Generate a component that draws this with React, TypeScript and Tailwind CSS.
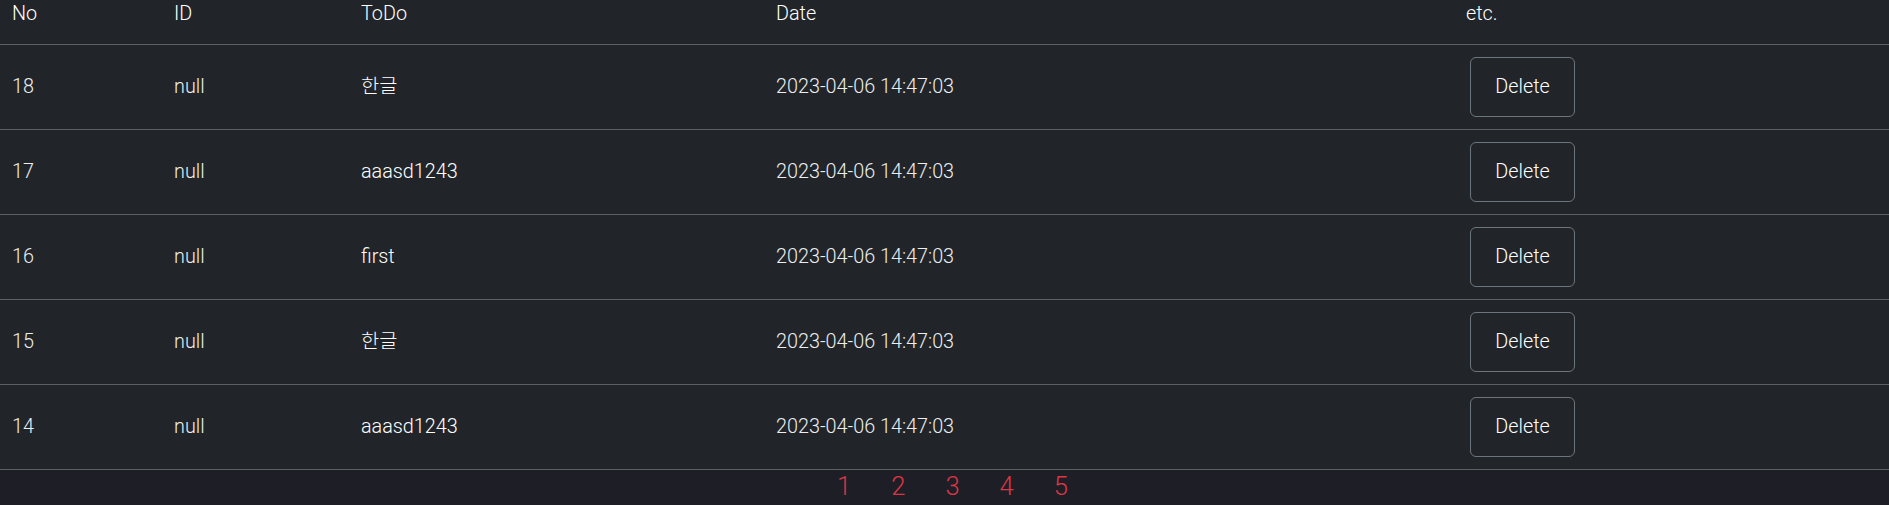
const todos = [
  { no: 18, id: "null", todo: "한글", date: "2023-04-06 14:47:03" },
  { no: 17, id: "null", todo: "aaasd1243", date: "2023-04-06 14:47:03" },
  { no: 16, id: "null", todo: "first", date: "2023-04-06 14:47:03" },
  { no: 15, id: "null", todo: "한글", date: "2023-04-06 14:47:03" },
  { no: 14, id: "null", todo: "aaasd1243", date: "2023-04-06 14:47:03" },
];

const font = {
  fontFamily: '"Roboto", "Noto Sans CJK KR", sans-serif',
};

export default function App() {
  return (
    <div
      style={font}
      className="min-h-screen bg-[#1e1f26] text-[19.8px] font-light"
    >
      <table className="w-full border-collapse bg-[#212529] text-[#eceef0]">
        <thead>
          <tr className="h-[44px] border-b border-[#5c5f63] text-left align-top leading-[1.45] text-white">
            <th className="w-[162px] px-3 font-light">No</th>
            <th className="w-[187px] px-3 font-light">ID</th>
            <th className="w-[415px] px-3 font-light">ToDo</th>
            <th className="w-[690px] px-3 font-light">Date</th>
            <th className="px-3 font-light">etc.</th>
          </tr>
        </thead>
        <tbody>
          {todos.map((t) => (
            <tr
              key={t.no}
              className="h-[85px] border-b border-[#5c5f63] align-middle leading-[1.5]"
            >
              <td className="px-3">{t.no}</td>
              <td className="px-3">{t.id}</td>
              <td className="px-3 text-white">{t.todo}</td>
              <td className="px-3">{t.date}</td>
              <td className="px-3 pl-[16px]">
                <button className="h-[60px] w-[105px] rounded-md border border-[#6c757d] text-white font-light">
                  Delete
                </button>
              </td>
            </tr>
          ))}
        </tbody>
      </table>
      <div className="flex justify-center gap-[40px] pl-[16px] pt-[4px] text-[25.6px] font-light leading-none text-[#dc3545]">
        {[1, 2, 3, 4, 5].map((n) => (
          <span key={n}>{n}</span>
        ))}
      </div>
    </div>
  );
}
